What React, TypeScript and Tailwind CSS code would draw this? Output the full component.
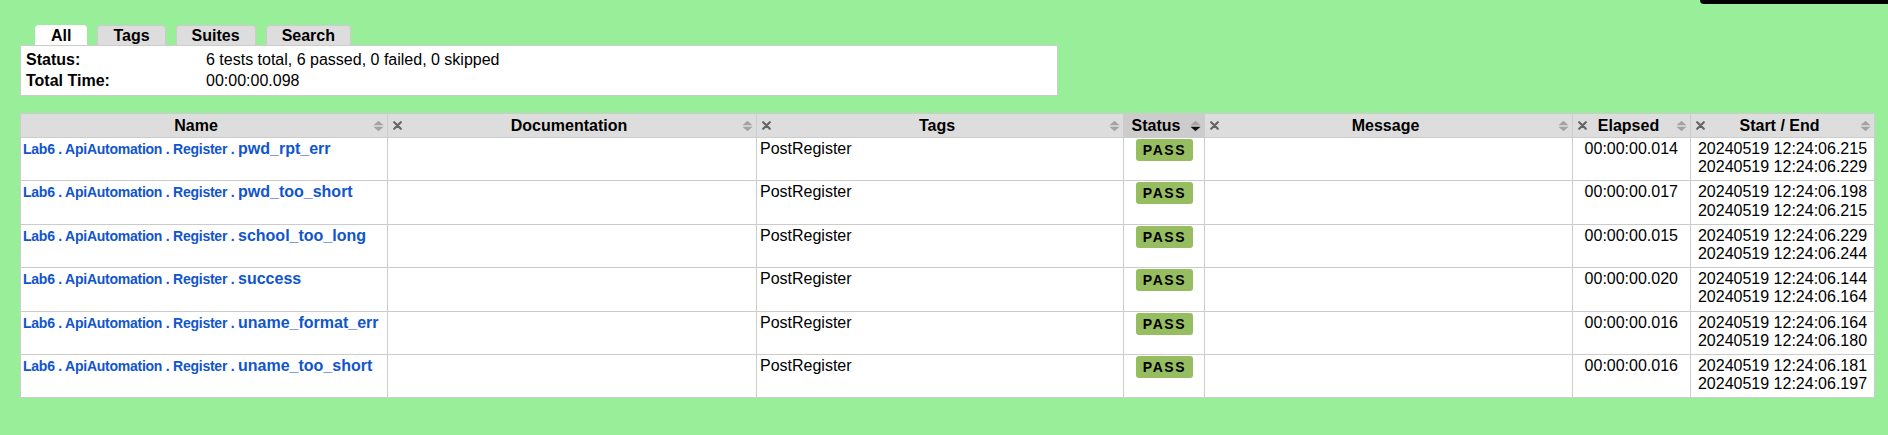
import React from 'react'

/** Robot Framework style report: tabs, totals and the test details table */

const tests = [
  { name: 'pwd_rpt_err', elapsed: '00:00:00.014', start: '20240519 12:24:06.215', end: '20240519 12:24:06.229' },
  { name: 'pwd_too_short', elapsed: '00:00:00.017', start: '20240519 12:24:06.198', end: '20240519 12:24:06.215' },
  { name: 'school_too_long', elapsed: '00:00:00.015', start: '20240519 12:24:06.229', end: '20240519 12:24:06.244' },
  { name: 'success', elapsed: '00:00:00.020', start: '20240519 12:24:06.144', end: '20240519 12:24:06.164' },
  { name: 'uname_format_err', elapsed: '00:00:00.016', start: '20240519 12:24:06.164', end: '20240519 12:24:06.180' },
  { name: 'uname_too_short', elapsed: '00:00:00.016', start: '20240519 12:24:06.181', end: '20240519 12:24:06.197' },
]

function SortIcon({ active = false }: { active?: boolean }) {
  return (
    <svg width="11" height="11" viewBox="0 0 11 11" className="absolute right-[3px] top-1/2 -translate-y-1/2">
      <polygon points="0.5,4.8 10.5,4.8 5.5,0.3" fill="#a3a3a3" />
      <polygon points="0.5,6.2 10.5,6.2 5.5,10.7" fill={active ? '#111' : '#a3a3a3'} />
    </svg>
  )
}

function HideIcon() {
  return (
    <svg width="9" height="9" viewBox="0 0 9 9" className="absolute left-[5px] top-[7px]">
      <path d="M1.2 1.2 L7.8 7.8 M7.8 1.2 L1.2 7.8" stroke="#666" strokeWidth="2.2" strokeLinecap="round" />
    </svg>
  )
}

function HeaderCell({
  label,
  hide = true,
  active = false,
}: {
  label: string
  hide?: boolean
  active?: boolean
}) {
  return (
    <th
      className={`relative h-[24px] border border-[#ccc] pr-[20px] text-center font-bold leading-[18px] ${
        hide ? 'pl-[14px]' : 'pl-[4px]'
      } ${active ? 'bg-[#ccc]' : 'bg-[#ddd]'}`}
    >
      {hide && <HideIcon />}
      {label}
      <SortIcon active={active} />
    </th>
  )
}

function Tab({ label, selected = false }: { label: string; selected?: boolean }) {
  return (
    <div
      className={`mr-[10px] h-[20px] rounded-t-[4px] border border-b-0 px-[15px] pt-[1px] font-bold leading-[18px] ${
        selected ? 'border-white bg-white' : 'border-[#ccc] bg-[#ddd]'
      }`}
    >
      {label}
    </div>
  )
}

export default function App() {
  return (
    <div
      className="relative min-h-screen bg-[#9e9] pl-[20px] pt-[25px] text-[16px] text-black"
      style={{ fontFamily: '"Liberation Sans", Arial, Helvetica, sans-serif' }}
    >
      <div className="absolute right-0 top-0 h-[4px] w-[188px] rounded-bl-[4px] bg-black" />

      <div className="flex pl-[15px]">
        <Tab label="All" selected />
        <Tab label="Tags" />
        <Tab label="Suites" />
        <Tab label="Search" />
      </div>

      <div className="w-[1038px] border border-[#ccc] bg-white px-[5px] pb-[4px] pt-[3px] leading-[21px]">
        <div className="flex">
          <div className="w-[180px] font-bold">Status:</div>
          <div>6 tests total, 6 passed, 0 failed, 0 skipped</div>
        </div>
        <div className="flex">
          <div className="w-[180px] font-bold">Total Time:</div>
          <div>00:00:00.098</div>
        </div>
      </div>

      <table className="mt-[17px] w-[1854px] table-fixed border-collapse border border-[#ccc] bg-white">
        <colgroup>
          <col className="w-[367px]" />
          <col className="w-[369px]" />
          <col className="w-[367px]" />
          <col className="w-[81px]" />
          <col className="w-[368px]" />
          <col className="w-[118px]" />
          <col className="w-[184px]" />
        </colgroup>
        <thead>
          <tr>
            <HeaderCell label="Name" hide={false} />
            <HeaderCell label="Documentation" />
            <HeaderCell label="Tags" />
            <HeaderCell label="Status" hide={false} active />
            <HeaderCell label="Message" />
            <HeaderCell label="Elapsed" />
            <HeaderCell label="Start / End" />
          </tr>
        </thead>
        <tbody>
          {tests.map((t) => (
            <tr key={t.name} className="align-top leading-[18.2px]">
              <td className="border border-[#ccc] px-[2px] pb-[4px] pt-[2px]">
                <a className="font-bold text-[#1155cc]" href="#">
                  <span className="text-[14px] tracking-[-0.25px]">Lab6 . ApiAutomation . Register . </span>
                  {t.name}
                </a>
              </td>
              <td className="border border-[#ccc] px-[3px] pb-[4px] pt-[2px]" />
              <td className="border border-[#ccc] px-[3px] pb-[4px] pt-[2px]">PostRegister</td>
              <td className="border border-[#ccc] px-[3px] pb-[4px] pt-[1px]">
                <div className="mx-auto flex h-[22px] w-[57px] items-center justify-center rounded-[3px] bg-[#97bd61] pl-[1px] text-[14px] font-bold tracking-[1.6px]">
                  PASS
                </div>
              </td>
              <td className="border border-[#ccc] px-[3px] pb-[4px] pt-[2px]" />
              <td className="border border-[#ccc] pb-[4px] pl-[3px] pr-[12px] pt-[2px] text-right">{t.elapsed}</td>
              <td className="whitespace-nowrap border border-[#ccc] px-[3px] pb-[4px] pt-[2px] text-center">
                {t.start}
                <br />
                {t.end}
              </td>
            </tr>
          ))}
        </tbody>
      </table>
    </div>
  )
}
